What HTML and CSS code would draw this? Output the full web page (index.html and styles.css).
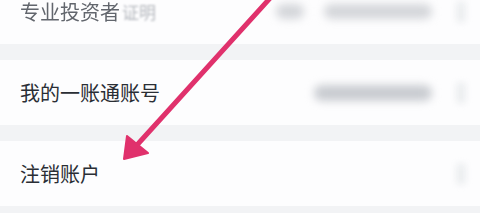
FILE: index.html
```html
<!DOCTYPE html>
<html lang="zh-CN">
<head>
    <meta charset="UTF-8">
    <meta name="viewport" content="width=device-width, initial-scale=1.0">
    <title>账户设置</title>
    <link rel="stylesheet" href="styles.css">
</head>
<body>

    <div class="list">
        <div class="row row-faded">
            <span class="label">专业投资者<span class="label-blur">证明</span></span>
            <div class="value">
                <span class="blot blot-short"></span>
                <span class="blot blot-long"></span>
                <span class="chevron"></span>
            </div>
        </div>

        <div class="row">
            <span class="label">我的一账通账号</span>
            <div class="value">
                <span class="blot blot-dark"></span>
                <span class="chevron"></span>
            </div>
        </div>

        <div class="row">
            <span class="label">注销账户</span>
            <div class="value">
                <span class="chevron"></span>
            </div>
        </div>
    </div>

    <!-- 标注箭头 -->
    <svg class="pointer" width="480" height="213" viewBox="0 0 480 213">
        <line x1="272" y1="-4" x2="137" y2="145" stroke="#e0316c" stroke-width="5" stroke-linecap="round"/>
        <polygon points="124,159 127,136 148,153" fill="#e0316c" stroke="#e0316c" stroke-width="2" stroke-linejoin="round"/>
    </svg>

</body>
</html>
```

FILE: styles.css
```css
body {
    margin: 0;
    padding: 0;
    background-color: #f2f3f5;
    font-family: "Noto Sans CJK SC", "Noto Sans", sans-serif;
    overflow: hidden;
}
.list {
    margin-top: -21px;
}
.row {
    height: 65px;
    background-color: #fdfdfe;
    margin-bottom: 16px;
    display: flex;
    align-items: center;
    justify-content: space-between;
    padding: 0 14px 0 20px;
}
.label {
    font-size: 20px;
    line-height: 22px;
    color: #2a2e35;
    display: flex;
    align-items: center;
}
.row-faded .label {
    color: #62666d;
    filter: blur(0.6px);
}
.label-blur {
    font-size: 17px;
    color: #b6b9bf;
    filter: blur(1.2px);
    margin-left: 2px;
}
.value {
    display: flex;
    align-items: center;
    gap: 20px;
}
.blot {
    display: block;
    height: 15px;
    border-radius: 8px;
    background-color: #d4d6da;
    filter: blur(4px);
}
.blot-short {
    width: 28px;
}
.blot-long {
    width: 108px;
}
.blot-dark {
    width: 118px;
    height: 16px;
    background-color: #c9ccd1;
}
.chevron {
    display: block;
    width: 10px;
    height: 22px;
    border-radius: 5px;
    background-color: #eceef0;
    filter: blur(3px);
    margin-left: 4px;
}
.pointer {
    position: absolute;
    left: 0;
    top: 0;
}
```
